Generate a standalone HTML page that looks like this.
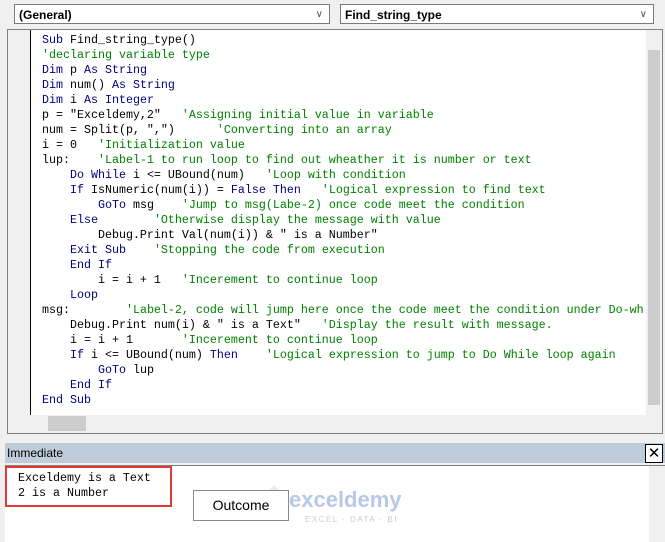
<!DOCTYPE html>
<html><head><meta charset="utf-8"><style>
body{margin:0;width:665px;height:541px;background:#f0f0f0;position:relative;overflow:hidden;font-family:"Liberation Sans",sans-serif}
.dd{position:absolute;top:4px;height:20px;background:#fff;border:1px solid #7a7a7a;font-size:12px;font-weight:bold;line-height:20px;padding-left:4px;box-sizing:border-box}
.dd span{position:absolute;right:6px;top:0;font-weight:normal;color:#555;font-size:10px}
#code{position:absolute;left:7px;top:29px;width:656px;height:405px;border:1px solid #808080;background:#fff;box-sizing:border-box}
#margin{position:absolute;left:0;top:0;width:22px;height:385px;background:#f0f0f0;border-right:1px solid #000}
pre{margin:0;position:absolute;left:34px;top:3px;font-family:"Liberation Mono",monospace;font-size:11.67px;line-height:15px;color:#000}
.k{color:#00007f}.c{color:#008000}
#vs{position:absolute;right:0;top:0;width:16px;height:385px;background:#f0f0f0}
#hs{position:absolute;left:0;bottom:0;width:654px;height:18px;background:#f0f0f0}
#imt{position:absolute;left:5px;top:443px;width:660px;height:20px;background:#bfcddb;font-size:12px;line-height:20px;padding-left:2px;box-sizing:border-box}
#imm{position:absolute;left:5px;top:465px;width:660px;height:76px;background:#fff;border-top:1px solid #808080}
</style></head><body>
<div class="dd" style="left:14px;width:316px">(General)<span>&#8744;</span></div>
<div class="dd" style="left:340px;width:314px">Find_string_type<span>&#8744;</span></div>
<div id="code">
<div id="margin"></div>
<pre><span class="k">Sub</span> Find_string_type()
<span class="c">'declaring variable type</span>
<span class="k">Dim</span> p <span class="k">As String</span>
<span class="k">Dim</span> num() <span class="k">As String</span>
<span class="k">Dim</span> i <span class="k">As Integer</span>
p = "Exceldemy,2"   <span class="c">'Assigning initial value in variable</span>
num = Split(p, ",")      <span class="c">'Converting into an array</span>
i = 0   <span class="c">'Initialization value</span>
lup:    <span class="c">'Label-1 to run loop to find out wheather it is number or text</span>
    <span class="k">Do While</span> i &lt;= UBound(num)   <span class="c">'Loop with condition</span>
    <span class="k">If</span> IsNumeric(num(i)) = <span class="k">False Then</span>   <span class="c">'Logical expression to find text</span>
        <span class="k">GoTo</span> msg    <span class="c">'Jump to msg(Labe-2) once code meet the condition</span>
    <span class="k">Else</span>        <span class="c">'Otherwise display the message with value</span>
        Debug.Print Val(num(i)) &amp; " is a Number"
    <span class="k">Exit Sub</span>    <span class="c">'Stopping the code from execution</span>
    <span class="k">End If</span>
        i = i + 1   <span class="c">'Incerement to continue loop</span>
    <span class="k">Loop</span>
msg:        <span class="c">'Label-2, code will jump here once the code meet the condition under Do-wh</span>
    Debug.Print num(i) &amp; " is a Text"   <span class="c">'Display the result with message.</span>
    i = i + 1       <span class="c">'Incerement to continue loop</span>
    <span class="k">If</span> i &lt;= UBound(num) <span class="k">Then</span>    <span class="c">'Logical expression to jump to Do While loop again</span>
        <span class="k">GoTo</span> lup
    <span class="k">End If</span>
<span class="k">End Sub</span></pre>
<div id="vs"><div style="position:absolute;left:2px;top:20px;width:12px;height:355px;background:#cdcdcd"></div></div>
<div id="hs"><div style="position:absolute;left:40px;top:1px;width:38px;height:15px;background:#cdcdcd"></div></div>
</div>
<div id="imt">Immediate<div style="position:absolute;right:2px;top:1px;width:16px;height:17px;border:1px solid #000;background:#fff;text-align:center;line-height:17px;font-size:15px">✕</div></div>
<div id="imm">
<pre style="left:13px;top:5px">Exceldemy is a Text
2 is a Number</pre>
<div style="position:absolute;left:0;top:0;width:167px;height:41px;border:2px solid #e53935;box-sizing:border-box"></div>
<div style="position:absolute;left:253px;top:18px;width:30px;height:34px;background:#e6ebf5;transform:rotate(45deg) scale(.7)"></div>
<div style="position:absolute;left:188px;top:24px;width:96px;height:31px;border:1px solid #888;box-sizing:border-box;background:#fff;font-size:14px;text-align:center;line-height:29px">Outcome</div>
<div style="position:absolute;left:284px;top:21px;font-size:22px;color:#b8c8e8;font-weight:bold">exceldemy</div>
<div style="position:absolute;left:300px;top:49px;font-size:8px;color:#ccc;letter-spacing:1.5px">EXCEL · DATA · BI</div>
<div style="position:absolute;right:0;top:0;width:16px;height:76px;background:#f0f0f0"></div>
</div>
</body></html>
